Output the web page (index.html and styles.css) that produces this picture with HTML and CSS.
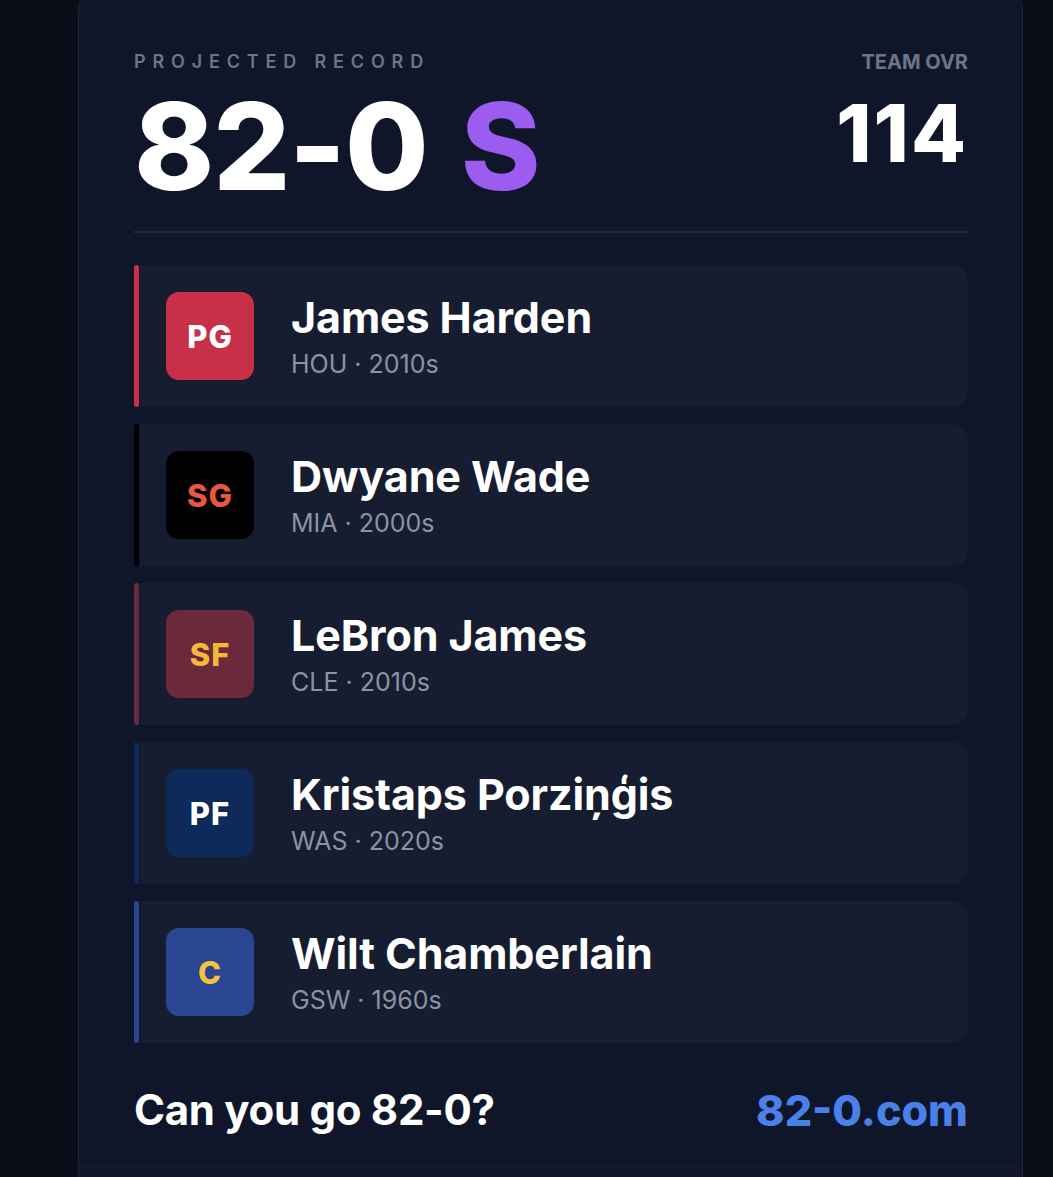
FILE: index.html
```html
<!DOCTYPE html>
<html lang="en">
<head>
  <meta charset="UTF-8" />
  <meta name="viewport" content="width=device-width, initial-scale=1.0" />
  <title>82-0 — Projected Record</title>
  <link rel="stylesheet" href="styles.css">
</head>
<body>
  <div class="card">
    <div class="summary">
      <div class="record">
        <div class="label label-spaced">PROJECTED RECORD</div>
        <div class="record-value">82-0 <span class="grade">S</span></div>
      </div>
      <div class="ovr">
        <div class="label label-bold">TEAM OVR</div>
        <div class="ovr-value">114</div>
      </div>
    </div>

    <div class="divider"></div>

    <ul class="roster">
      <li class="player">
        <span class="bar bar-hou"></span>
        <div class="player-body">
          <div class="pos pos-hou">PG</div>
          <div class="player-info">
            <div class="player-name">James Harden</div>
            <div class="player-meta">HOU · 2010s</div>
          </div>
        </div>
      </li>
      <li class="player">
        <span class="bar bar-mia"></span>
        <div class="player-body">
          <div class="pos pos-mia">SG</div>
          <div class="player-info">
            <div class="player-name">Dwyane Wade</div>
            <div class="player-meta">MIA · 2000s</div>
          </div>
        </div>
      </li>
      <li class="player">
        <span class="bar bar-cle"></span>
        <div class="player-body">
          <div class="pos pos-cle">SF</div>
          <div class="player-info">
            <div class="player-name">LeBron James</div>
            <div class="player-meta">CLE · 2010s</div>
          </div>
        </div>
      </li>
      <li class="player">
        <span class="bar bar-was"></span>
        <div class="player-body">
          <div class="pos pos-was">PF</div>
          <div class="player-info">
            <div class="player-name">Kristaps Porziņģis</div>
            <div class="player-meta">WAS · 2020s</div>
          </div>
        </div>
      </li>
      <li class="player">
        <span class="bar bar-gsw"></span>
        <div class="player-body">
          <div class="pos pos-gsw">C</div>
          <div class="player-info">
            <div class="player-name">Wilt Chamberlain</div>
            <div class="player-meta">GSW · 1960s</div>
          </div>
        </div>
      </li>
    </ul>

    <div class="card-footer">
      <span class="cta">Can you go 82-0?</span>
      <a class="site" href="#">82-0.com</a>
    </div>

    <div class="card-base"></div>
  </div>
</body>
</html>
```

FILE: styles.css
```css
:root {
  --page: #0b0e19;
  --card: #10162a;
  --card-border: #1f2538;
  --row: #171d30;
  --muted: #6b7588;
  --meta: #8a93a5;
  --text: #ffffff;
}

body {
  margin: 0;
  background-color: var(--page);
  color: var(--text);
  font-family: Inter, "Noto Sans", sans-serif;
  overflow: hidden;
}

.card {
  width: 943px;
  margin: -14px 0 0 78px;
  background: var(--card);
  border: 1px solid var(--card-border);
  border-radius: 24px;
}

.summary {
  display: flex;
  justify-content: space-between;
  padding: 64px 54px 0 55px;
}

.label {
  font-size: 18px;
  font-weight: 600;
  color: var(--muted);
  line-height: 22px;
}

.label-spaced {
  letter-spacing: 0.38em;
}

.label-bold {
  font-size: 20px;
  font-weight: 700;
}

.record-value {
  font-size: 121px;
  font-weight: 800;
  line-height: 130px;
  letter-spacing: -0.01em;
  margin-top: 8px;
}

.grade {
  color: #9d5cf0;
  margin-left: 8px;
  letter-spacing: 0.02em;
}

.ovr {
  text-align: right;
}

.ovr-value {
  font-size: 80px;
  font-weight: 800;
  line-height: 88px;
  letter-spacing: 2px;
  margin-top: 16px;
}

.divider {
  height: 2px;
  background: #222939;
  margin: 20px 54px 32px 55px;
}

.roster {
  list-style: none;
  margin: 0;
  padding: 0 54px 0 55px;
  display: flex;
  flex-direction: column;
  gap: 17px;
}

.player {
  display: flex;
}

.bar {
  width: 5px;
  border-radius: 3px;
  flex-shrink: 0;
}

.player-body {
  flex: 1;
  display: flex;
  align-items: center;
  gap: 37px;
  padding: 27px 0 27px 26px;
  margin-left: 1px;
  background: var(--row);
  border-radius: 0 16px 16px 0;
}

.pos {
  width: 88px;
  height: 88px;
  border-radius: 13px;
  display: flex;
  align-items: center;
  justify-content: center;
  font-size: 31px;
  font-weight: 800;
  letter-spacing: 1px;
  flex-shrink: 0;
}

.player-name {
  font-size: 43px;
  font-weight: 700;
  line-height: 46px;
  letter-spacing: -0.1px;
}

.player-meta {
  font-size: 25px;
  color: var(--meta);
  line-height: 30px;
  margin-top: 9px;
}

.bar-hou { background: #c8304a; }
.pos-hou { background: #c8304a; color: #ffffff; }

.bar-mia { background: #000000; }
.pos-mia { background: #000000; color: #e8573f; }

.bar-cle { background: #6b2a3c; }
.pos-cle { background: #6b2a3c; color: #f5b83d; }

.bar-was { background: #0e2a5a; }
.pos-was { background: #0e2a5a; color: #ffffff; }

.bar-gsw { background: #2a4591; }
.pos-gsw { background: #2a4591; color: #f5c23d; }

.card-footer {
  box-sizing: border-box;
  display: flex;
  justify-content: space-between;
  align-items: center;
  height: 121px;
  padding: 12px 54px 0 55px;
}

.cta {
  font-size: 42px;
  font-weight: 700;
  letter-spacing: -0.3px;
}

.site {
  font-size: 43px;
  font-weight: 800;
  color: #4a80e8;
  text-decoration: none;
}

.card-base {
  height: 60px;
  border-top: 1px solid #161c2d;
  background: #121829;
  border-radius: 0 0 24px 24px;
}
```
